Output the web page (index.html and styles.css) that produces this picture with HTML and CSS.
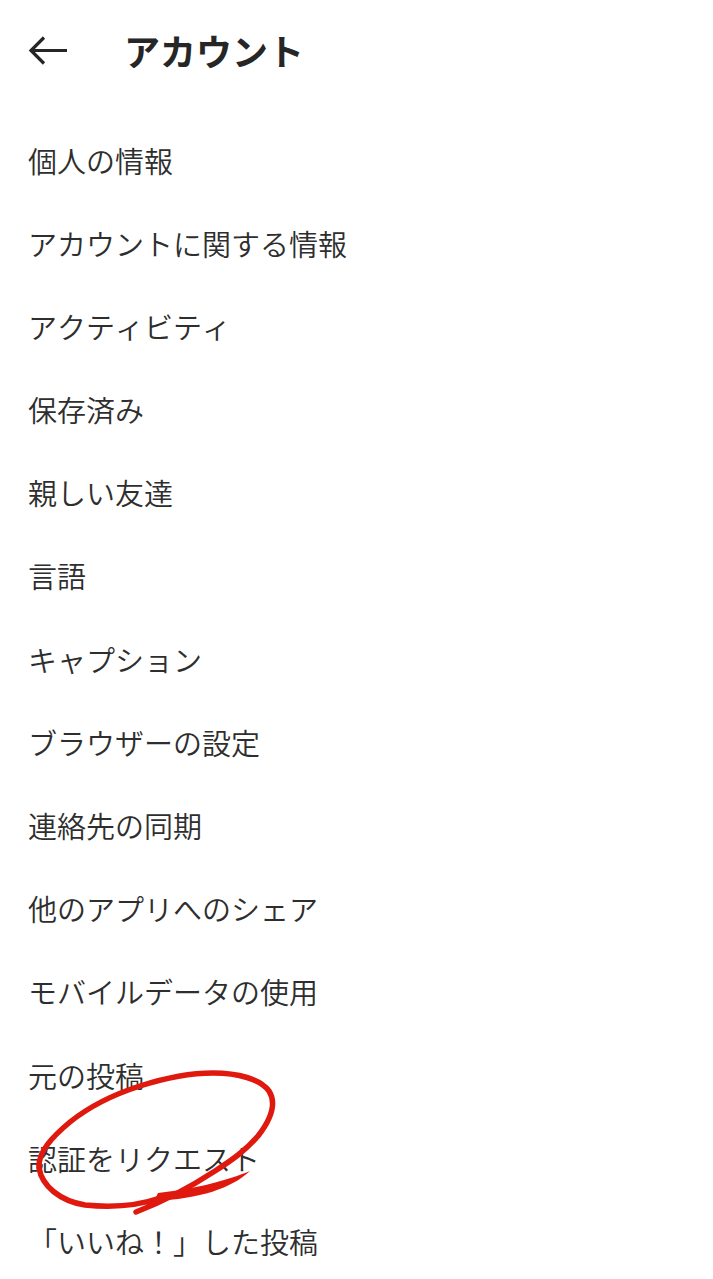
FILE: index.html
```html
<!DOCTYPE html>
<html lang="ja">
<head>
    <meta charset="UTF-8">
    <meta name="viewport" content="width=device-width, initial-scale=1.0">
    <title>アカウント</title>
    <link rel="stylesheet" href="styles.css">
</head>
<body>
    <div class="page">
        <header class="top-bar">
            <svg class="back-icon" viewBox="0 0 40 30" width="40" height="30" aria-hidden="true">
                <path d="M39 15.5H3M16 2.5L3 15.5L16 28.5" fill="none" stroke="#262626" stroke-width="3.2"/>
            </svg>
            <h1 class="title">アカウント</h1>
        </header>

        <ul class="menu">
            <li>個人の情報</li>
            <li>アカウントに関する情報</li>
            <li>アクティビティ</li>
            <li>保存済み</li>
            <li>親しい友達</li>
            <li>言語</li>
            <li>キャプション</li>
            <li>ブラウザーの設定</li>
            <li>連絡先の同期</li>
            <li>他のアプリへのシェア</li>
            <li>モバイルデータの使用</li>
            <li>元の投稿</li>
            <li>認証をリクエスト</li>
            <li>「いいね！」した投稿</li>
        </ul>

        <!-- red pen circle drawn over the list -->
        <svg class="pen-mark" viewBox="0 0 713 1279" width="713" height="1279" aria-hidden="true">
            <path class="pen-stroke" d="M160 1198C140 1205 115 1208 85 1205C60 1201 42 1186 39 1168C38 1152 52 1137 70 1122C90 1106 115 1094 140 1086C165 1078 190 1073 213 1073C238 1073 260 1079 269 1091C276 1102 272 1118 258 1136C245 1151 232 1160 215 1171C195 1184 170 1199 136 1212"/>
            <path class="pen-tail" d="M250 1171C228 1180 200 1188 158 1193L154 1201C200 1199 232 1188 250 1171Z"/>
        </svg>
    </div>
</body>
</html>
```

FILE: styles.css
```css
body {
    margin: 0;
    background-color: #ffffff;
    font-family: "Noto Sans CJK JP", "Noto Sans", sans-serif;
    color: #262626;
}

.page {
    position: relative;
    width: 713px;
    height: 1279px;
    overflow: hidden;
}

/* Top bar */
.top-bar {
    display: flex;
    align-items: center;
    height: 100px;
    padding-left: 28px;
}

.back-icon {
    flex-shrink: 0;
}

.title {
    margin: 0 0 0 56px;
    font-size: 36px;
    font-weight: 700;
    line-height: 1;
}

/* Menu list */
.menu {
    list-style: none;
    margin: 0;
    padding: 18.5px 0 0 28px;
    font-kerning: none;
}

.menu li {
    height: 83.2px;
    line-height: 83.2px;
    font-size: 29px;
    font-weight: 350;
    color: #2e2e2e;
    white-space: nowrap;
}

/* Hand drawn mark */
.pen-mark {
    position: absolute;
    top: 0;
    left: 0;
}

.pen-stroke {
    fill: none;
    stroke: #e0190f;
    stroke-width: 5.5;
    stroke-linecap: round;
    stroke-linejoin: round;
}

.pen-tail {
    fill: #e0190f;
}
```
